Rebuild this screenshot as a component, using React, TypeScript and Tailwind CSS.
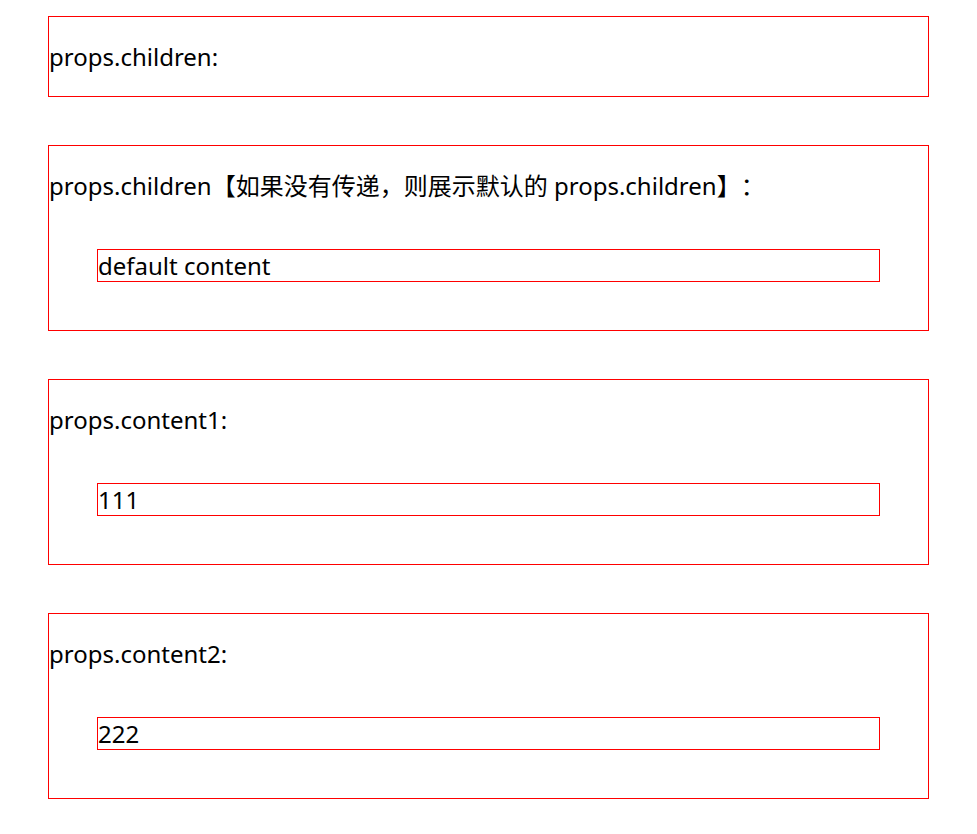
const font = { fontFamily: '"Noto Sans", "Noto Sans CJK SC", sans-serif' };

function Slot({ label, children }: { label: string; children?: React.ReactNode }) {
  return (
    <div className="border border-[#ff0000]">
      <p className="my-6 text-[24px] leading-[31px] text-black [text-spacing-trim:space-all]">{label}</p>
      {children !== undefined && (
        <div className="mx-12 my-12 border border-[#ff0000] text-[24px] leading-[31px] text-black">
          {children}
        </div>
      )}
    </div>
  );
}

export default function App() {
  return (
    <div className="flex flex-col gap-12 px-12 pt-4 pb-9 bg-white" style={font}>
      <Slot label="props.children:" />
      <Slot label="props.children【如果没有传递，则展示默认的 props.children】：">default content</Slot>
      <Slot label="props.content1:">111</Slot>
      <Slot label="props.content2:">222</Slot>
    </div>
  );
}
